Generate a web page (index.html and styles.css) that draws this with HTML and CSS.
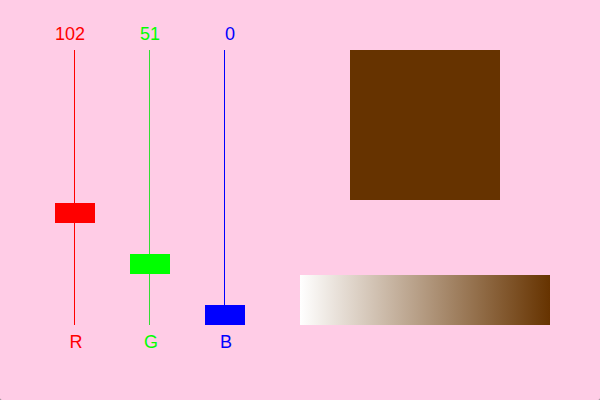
FILE: index.html
```html
<!DOCTYPE html>
<html>
<head>
<meta charset="utf-8">
<link rel="stylesheet" href="styles.css">
</head>
<body>
<div class="page">
  <div class="sliders">
    <div class="slider red">
      <div class="value">102</div>
      <div class="track"><div class="line"></div><div class="handle" style="top:153px"></div></div>
      <div class="label">R</div>
    </div>
    <div class="slider green">
      <div class="value">51</div>
      <div class="track"><div class="line"></div><div class="handle" style="top:204px"></div></div>
      <div class="label">G</div>
    </div>
    <div class="slider blue">
      <div class="value">0</div>
      <div class="track"><div class="line"></div><div class="handle" style="top:255px"></div></div>
      <div class="label">B</div>
    </div>
  </div>
  <div class="preview">
    <div class="swatch"></div>
    <div class="gradient"></div>
  </div>
</div>
</body>
</html>
```
FILE: styles.css
```css
html { background: #808080; }
body { margin: 0; }
.page {
  width: 600px;
  height: 400px;
  background: #ffcce6;
  display: flex;
  align-items: flex-start;
  padding-left: 55px;
  box-sizing: border-box;
  gap: 55px;
  border-radius: 0 0 2px 2px;
  font-family: "Liberation Sans", Arial, sans-serif;
  font-size: 18px;
}
.sliders {
  display: flex;
  gap: 35px;
  padding-top: 24px;
}
.slider {
  width: 40px;
  display: flex;
  flex-direction: column;
}
.value {
  height: 20px;
  line-height: 20px;
  text-align: right;
  padding-right: 10px;
  margin-bottom: 6px;
}
.track {
  position: relative;
  height: 275px;
}
.line {
  width: 1px;
  height: 100%;
  margin-left: 19px;
}
.handle {
  position: absolute;
  left: 0;
  width: 40px;
  height: 20px;
}
.label {
  margin-top: 7px;
  height: 20px;
  line-height: 20px;
  text-align: center;
  padding-left: 2px;
}
.red { color: #ff0000; }
.red .line, .red .handle { background: #ff0000; }
.green { color: #00ff00; }
.green .line { background: #33dd33; }
.green .handle { background: #00ff00; }
.blue { color: #0000ff; }
.blue .line, .blue .handle { background: #0000ff; }
.preview {
  display: flex;
  flex-direction: column;
  align-items: center;
  gap: 75px;
  margin-top: 50px;
  width: 250px;
}
.swatch {
  width: 150px;
  height: 150px;
  background: #663300;
}
.gradient {
  width: 250px;
  height: 50px;
  background: linear-gradient(to right, #ffffff, #663300);
}
```
